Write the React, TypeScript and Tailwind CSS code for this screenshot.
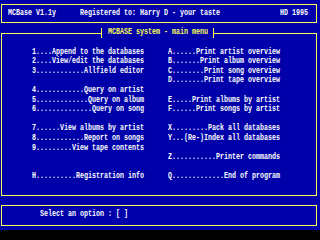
const sp = (n: number) => ' '.repeat(n);

// one menu entry, dotted out to 28 columns
const item = (key: string, label: string) => key + '.'.repeat(27 - label.length) + label;

const line = (left?: string, right?: string) =>
  sp(8) + (left ?? sp(28)) + sp(6) + (right ?? '');

const header =
  sp(2) + 'MCBase V1.1y' + sp(6) + 'Registered to: Harry D - your taste' + sp(15) + 'HD 1995';

const menu: string[] = [
  '',
  line(item('1', 'Append to the databases'), item('A', 'Print artist overview')),
  line(item('2', 'View/edit the databases'), item('B', 'Print album overview')),
  line(item('3', 'Allfield editor'), item('C', 'Print song overview')),
  line(undefined, item('D', 'Print tape overview')),
  line(item('4', 'Query on artist')),
  line(item('5', 'Query on album'), item('E', 'Print albums by artist')),
  line(item('6', 'Query on song'), item('F', 'Print songs by artist')),
  '',
  line(item('7', 'View albums by artist'), item('X', 'Pack all databases')),
  line(item('8', 'Report on songs'), item('Y', '(Re-)Index all databases')),
  line(item('9', 'View tape contents')),
  line(undefined, item('Z', 'Printer commands')),
  '',
  line(item('H', 'Registration info'), item('Q', 'End of program')),
  '',
];

function Row({ text }: { text: string }) {
  return (
    <div className="h-[9.6px] leading-[9.6px] whitespace-pre">
      <span className="inline-block origin-left scale-x-[0.7407]">{text}</span>
    </div>
  );
}

export default function App() {
  return (
    <div className="w-[320px] h-[240px] bg-black overflow-hidden font-['Liberation_Mono',monospace] text-[9px] font-bold text-white">
      <div className="h-[230px] bg-[#0000aa] flex flex-col">
        {/* Header */}
        <div className="mt-[4px] ml-[1px] w-[316px] h-[19px] border border-[#ffff55] pt-[4px]">
          <div className="-ml-[2px]">
            <Row text={header} />
          </div>
        </div>

        {/* Main menu box: title row */}
        <div className="mt-[5px] ml-[1px] w-[316px] h-[10px] flex shrink-0">
          <div className="w-[100px] h-[5px] self-end shrink-0 border-t border-l border-[#ffff55]" />
          <div className="w-px h-full shrink-0 bg-[#ffff55]" />
          <div className="w-[6px] shrink-0" />
          <div className="w-[100px] shrink-0 self-center text-[#ffff55] leading-[9.6px] whitespace-pre">
            <span className="inline-block origin-left scale-x-[0.7407]">MCBASE system - main menu</span>
          </div>
          <div className="w-[5px] shrink-0" />
          <div className="w-px h-full shrink-0 bg-[#ffff55]" />
          <div className="flex-1 h-[5px] self-end border-t border-r border-[#ffff55]" />
        </div>

        {/* Main menu body */}
        <div className="ml-[1px] w-[316px] h-[158px] shrink-0 border-l border-r border-b border-[#ffff55]">
          <div className="-ml-[2px]">
            {menu.map((t, i) => (
              <Row key={i} text={t} />
            ))}
          </div>
        </div>

        {/* Prompt */}
        <div className="mt-[9px] ml-[1px] w-[316px] h-[21px] shrink-0 border border-[#ffff55] pt-[4px]">
          <div className="-ml-[2px]">
            <Row text={sp(10) + 'Select an option : [ ]'} />
          </div>
        </div>
      </div>
    </div>
  );
}
